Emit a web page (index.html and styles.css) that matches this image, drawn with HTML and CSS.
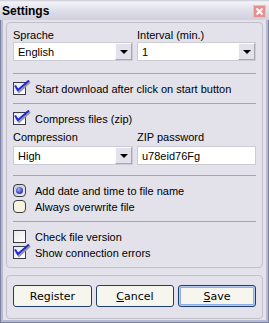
FILE: index.html
```html
<!DOCTYPE html>
<html lang="en">
<head>
    <meta charset="UTF-8">
    <title>Settings</title>
    <link rel="stylesheet" href="styles.css">
</head>
<body>
    <div class="window">
        <div class="titlebar">
            <span class="title">Settings</span>
            <span class="close">
                <svg width="13" height="13" viewBox="0 0 13 13">
                    <path d="M3.5 3.5 L9.5 9.5 M9.5 3.5 L3.5 9.5" stroke="#fff" stroke-width="2.2"/>
                </svg>
            </span>
        </div>

        <div class="content">
            <div class="group main">
                <div class="pair">
                    <div class="field">
                        <div class="label">Sprache</div>
                        <div class="combo"><span class="value">English</span><span class="drop"><i></i></span></div>
                    </div>
                    <div class="field">
                        <div class="label">Interval (min.)</div>
                        <div class="combo"><span class="value">1</span><span class="drop"><i></i></span></div>
                    </div>
                </div>

                <div class="sep first"></div>

                <div class="option top">
                    <span class="check on"></span>
                    <span>Start download after click on start button</span>
                </div>

                <div class="sep"></div>

                <div class="option top">
                    <span class="check on"></span>
                    <span>Compress files (zip)</span>
                </div>

                <div class="pair second">
                    <div class="field">
                        <div class="label">Compression</div>
                        <div class="combo"><span class="value">High</span><span class="drop"><i></i></span></div>
                    </div>
                    <div class="field">
                        <div class="label">ZIP password</div>
                        <div class="textbox">u78eid76Fg</div>
                    </div>
                </div>

                <div class="sep third"></div>

                <div class="option top">
                    <span class="radio on"></span>
                    <span>Add date and time to file name</span>
                </div>
                <div class="option">
                    <span class="radio"></span>
                    <span>Always overwrite file</span>
                </div>

                <div class="sep"></div>

                <div class="option top">
                    <span class="check"></span>
                    <span>Check file version</span>
                </div>
                <div class="option">
                    <span class="check on"></span>
                    <span>Show connection errors</span>
                </div>
            </div>

            <div class="group buttons">
                <button>Register</button>
                <button><u>C</u>ancel</button>
                <button class="default"><u>S</u>ave</button>
            </div>
        </div>
    </div>
</body>
</html>
```

FILE: styles.css
```css
body {
    margin: 0;
    font-family: 'Liberation Sans', Arial, sans-serif;
    font-size: 11px;
    color: #000;
}
.window {
    width: 269px;
    height: 323px;
    box-sizing: border-box;
    background: #e3e2ea;
    border: 1px solid #7c819f;
    border-top: none;
    box-shadow: inset 2px 0 0 #b6b9cf, inset -2px 0 0 #b6b9cf, inset 0 -2px 0 #b6b9cf;
}
.titlebar {
    height: 20px;
    display: flex;
    align-items: center;
    justify-content: space-between;
    padding: 0 3px 0 2px;
    margin: 0 -1px;
    background: linear-gradient(#c9c9d6 0, #f3f3f8 2px, #e2e2ec 45%, #cfcfde 100%);
}
.title {
    font-weight: bold;
    font-size: 12px;
    padding-top: 2px;
}
.close {
    width: 13px;
    height: 13px;
    background: #e98d8d;
    border: 1px solid #f2bcbc;
    box-sizing: border-box;
    display: flex;
    margin-top: 3px;
}
.close svg {
    margin: -1px;
}
.content {
    padding: 2px 5px 0 5px;
}
.group {
    border: 1px solid #c2c1ca;
    border-radius: 4px;
    box-sizing: border-box;
}
.main {
    height: 246px;
    padding: 6px 6px 0 6px;
}
.pair {
    display: grid;
    grid-template-columns: 120px 1fr;
    column-gap: 4px;
}
.label {
    line-height: 13px;
    height: 13px;
}
.second {
    margin-top: 6px;
}
.second .label {
    height: 15px;
}
.combo, .textbox {
    height: 19px;
    box-sizing: border-box;
    background: #fff;
    border: 1px solid #cdccd4;
    display: flex;
    align-items: center;
}
.value, .textbox {
    padding-left: 4px;
    flex: 1;
}
.drop {
    width: 17px;
    height: 17px;
    box-sizing: border-box;
    background: #e3e2ea;
    border: 1px solid;
    border-color: #fbfbfd #a9a8b2 #a9a8b2 #fbfbfd;
    display: flex;
    align-items: center;
    justify-content: center;
}
.drop i {
    width: 0;
    height: 0;
    border-left: 4px solid transparent;
    border-right: 4px solid transparent;
    border-top: 4px solid #000;
    margin-top: 1px;
}
.sep {
    border-top: 1px solid #a6a5ae;
    margin-top: 8px;
}
.sep.first {
    margin-top: 12px;
}
.sep.third {
    margin-top: 10px;
}
.option {
    display: flex;
    align-items: center;
    height: 13px;
    gap: 9px;
    margin-top: 3px;
}
.option.top {
    margin-top: 8px;
}
.check, .radio {
    width: 13px;
    height: 13px;
    flex: none;
    box-sizing: border-box;
    position: relative;
}
.check {
    background: linear-gradient(135deg, #e8e8ec, #fff);
    border: 1px solid #3c3c46;
}
.check.on::after {
    content: '';
    position: absolute;
    left: 0;
    top: -3px;
    width: 18px;
    height: 15px;
    background: url("data:image/svg+xml,%3Csvg xmlns='http://www.w3.org/2000/svg' width='18' height='15'%3E%3Cpath d='M2 8 L5 12 L16 2' fill='none' stroke='%23969699' stroke-width='2'/%3E%3Cpath d='M1 5.5 L4 10 L15 0.5' fill='none' stroke='%231c28e0' stroke-width='2'/%3E%3C/svg%3E");
}
.radio {
    border: 1px solid #3d3d44;
    border-radius: 4px;
    background: #f6f3df;
}
.radio.on {
    background: linear-gradient(135deg, #c8c8d2, #eeeef2);
}
.radio.on::after {
    content: '';
    position: absolute;
    left: 2px;
    top: 2px;
    width: 7px;
    height: 7px;
    border-radius: 50%;
    background: radial-gradient(circle at 40% 35%, #a8b0f0 0, #3a44c8 60%, #2c3490 100%);
}
.buttons {
    margin-top: 7px;
    height: 44px;
    padding: 9px 6px 0 6px;
    display: grid;
    grid-template-columns: 79px 78px 78px;
    column-gap: 4px;
    align-items: start;
}
button {
    height: 22px;
    margin: 0;
    padding: 0;
    background: #f7f6ee;
    border: 1px solid #1e3c6c;
    border-radius: 3px;
    font-family: 'DejaVu Sans', Verdana, sans-serif;
    font-size: 11px;
    color: #000;
}
button.default {
    box-shadow: inset 0 0 0 1px #b5cdf4, inset 0 0 0 2px #8fb0e6;
}
```
